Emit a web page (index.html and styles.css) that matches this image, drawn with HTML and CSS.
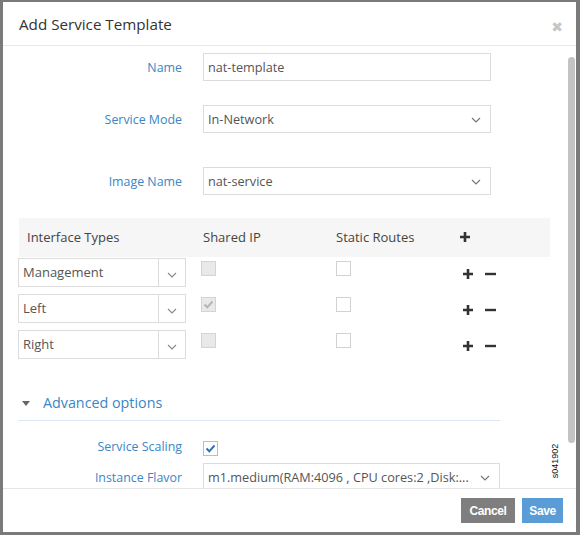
FILE: index.html
```html
<!DOCTYPE html>
<html>
<head>
<meta charset="utf-8">
<link rel="stylesheet" href="styles.css">
</head>
<body>
<div class="frame">
  <div class="modal">
    <div class="modal-header">
      <span class="title">Add Service Template</span>
      <span class="close">&#x2716;</span>
    </div>
    <div class="modal-body">
      <div class="form-row row-name">
        <label class="lbl">Name</label>
        <div class="input">nat-template</div>
      </div>
      <div class="form-row row-mode">
        <label class="lbl">Service Mode</label>
        <div class="input select"><span class="val">In-Network</span><svg class="chev" width="10" height="6" viewBox="0 0 10 6"><path d="M1 1 L5 5 L9 1" fill="none" stroke="#777" stroke-width="1.2"/></svg></div>
      </div>
      <div class="form-row row-image">
        <label class="lbl">Image Name</label>
        <div class="input select"><span class="val">nat-service</span><svg class="chev" width="10" height="6" viewBox="0 0 10 6"><path d="M1 1 L5 5 L9 1" fill="none" stroke="#777" stroke-width="1.2"/></svg></div>
      </div>

      <div class="itable">
        <div class="ihead">
          <div class="c1">Interface Types</div>
          <div class="c2">Shared IP</div>
          <div class="c3">Static Routes</div>
          <div class="c4"><svg class="plus-ic" width="10" height="10" viewBox="0 0 10 10"><path d="M5 0 V10 M0 5 H10" stroke="#333" stroke-width="2.6"/></svg></div>
        </div>
        <div class="irow">
          <div class="c1"><div class="combo"><span class="ctext">Management</span><span class="cbtn"><svg width="10" height="6" viewBox="0 0 10 6"><path d="M1 1 L5 5 L9 1" fill="none" stroke="#888" stroke-width="1.1"/></svg></span></div></div>
          <div class="c2"><span class="cb disabled"></span></div>
          <div class="c3"><span class="cb"></span></div>
          <div class="c4 ops"><svg width="10" height="10" viewBox="0 0 10 10"><path d="M5 0 V10 M0 5 H10" stroke="#333" stroke-width="2.6"/></svg><svg width="11" height="10" viewBox="0 0 11 10"><path d="M0 5 H11" stroke="#333" stroke-width="2.4"/></svg></div>
        </div>
        <div class="irow">
          <div class="c1"><div class="combo"><span class="ctext">Left</span><span class="cbtn"><svg width="10" height="6" viewBox="0 0 10 6"><path d="M1 1 L5 5 L9 1" fill="none" stroke="#888" stroke-width="1.1"/></svg></span></div></div>
          <div class="c2"><span class="cb disabled"><svg width="13" height="13" viewBox="0 0 13 13"><path d="M2.5 6.5 L5.3 9.3 L10.5 3.5" fill="none" stroke="#b5b5b5" stroke-width="2"/></svg></span></div>
          <div class="c3"><span class="cb"></span></div>
          <div class="c4 ops"><svg width="10" height="10" viewBox="0 0 10 10"><path d="M5 0 V10 M0 5 H10" stroke="#333" stroke-width="2.6"/></svg><svg width="11" height="10" viewBox="0 0 11 10"><path d="M0 5 H11" stroke="#333" stroke-width="2.4"/></svg></div>
        </div>
        <div class="irow">
          <div class="c1"><div class="combo"><span class="ctext">Right</span><span class="cbtn"><svg width="10" height="6" viewBox="0 0 10 6"><path d="M1 1 L5 5 L9 1" fill="none" stroke="#888" stroke-width="1.1"/></svg></span></div></div>
          <div class="c2"><span class="cb disabled"></span></div>
          <div class="c3"><span class="cb"></span></div>
          <div class="c4 ops"><svg width="10" height="10" viewBox="0 0 10 10"><path d="M5 0 V10 M0 5 H10" stroke="#333" stroke-width="2.6"/></svg><svg width="11" height="10" viewBox="0 0 11 10"><path d="M0 5 H11" stroke="#333" stroke-width="2.4"/></svg></div>
        </div>
      </div>

      <div class="adv">
        <svg class="tri" width="8" height="5" viewBox="0 0 8 5"><path d="M0 0 L8 0 L4 5 Z" fill="#666"/></svg>
        <span class="adv-title">Advanced options</span>
      </div>

      <div class="form-row row-scaling">
        <label class="lbl">Service Scaling</label>
        <div><span class="cb checked"><svg width="13" height="13" viewBox="0 0 13 13"><path d="M2.5 6.5 L5.3 9.3 L10.5 3.5" fill="none" stroke="#2d72b8" stroke-width="2"/></svg></span></div>
      </div>
      <div class="form-row row-flavor">
        <label class="lbl">Instance Flavor</label>
        <div class="input select wide"><span class="val">m1.medium(RAM:4096 , CPU cores:2 ,Disk:...</span><svg class="chev" width="10" height="6" viewBox="0 0 10 6"><path d="M1 1 L5 5 L9 1" fill="none" stroke="#777" stroke-width="1.2"/></svg></div>
      </div>

      <div class="scrollthumb"></div>
      <div class="stamp">s041902</div>
    </div>
    <div class="modal-footer">
      <button class="btn cancel">Cancel</button>
      <button class="btn save">Save</button>
    </div>
  </div>
</div>
</body>
</html>
```

FILE: styles.css
```css
* { box-sizing: border-box; }
html, body { margin: 0; padding: 0; }
body {
  width: 580px;
  height: 535px;
  overflow: hidden;
  font-family: "Open Sans", "Noto Sans", sans-serif;
}
.frame {
  width: 580px;
  height: 535px;
  background: #7a7a7a;
  padding: 2px 4px 3px 3px;
}
.modal {
  background: #fff;
  height: 530px;
  display: flex;
  flex-direction: column;
}
.modal-header {
  height: 44px;
  flex: none;
  border-bottom: 1px solid #e8e8e8;
  display: flex;
  align-items: center;
  justify-content: space-between;
  padding: 0 13px 0 16px;
}
.title {
  font-size: 15.2px;
  color: #333;
  margin-top: 1px;
}
.close {
  font-size: 14px;
  color: #c6c6c6;
  font-family: "DejaVu Sans", sans-serif;
  font-weight: bold;
  margin-top: 6px;
}
.modal-body {
  flex: 1;
  position: relative;
  overflow: hidden;
  padding-top: 7px;
}
.form-row {
  display: grid;
  grid-template-columns: 179px 288px;
  column-gap: 21px;
  align-items: center;
}
.lbl {
  text-align: right;
  color: #3a86c6;
  font-size: 12.4px;
}
.input {
  height: 28px;
  border: 1px solid #dcdcdc;
  font-size: 12.7px;
  color: #555;
  padding: 0 5px 0 4px;
  display: flex;
  align-items: center;
  justify-content: space-between;
}
.chev { flex: none; margin-right: 4px; margin-top: 1px; }
.row-mode { margin-top: 24px; }
.row-image { margin-top: 34px; }

.itable {
  margin: 23px 0 0 16px;
  width: 531px;
  font-size: 13px;
  color: #444;
}
.ihead, .irow {
  display: grid;
  grid-template-columns: 181px 136px 124px 1fr;
}
.ihead {
  height: 39px;
  background: #f6f6f6;
  align-items: center;
  margin-bottom: 1px;
}
.ihead .c1 { padding-left: 8px; margin-top: -2px; }
.ihead .c2 { padding-left: 3px; margin-top: -2px; }
.ihead .c3 { margin-top: -2px; }
.ihead .c4 { display: flex; align-items: center; padding-left: 0; margin-top: -2px; }
.irow {
  height: 28px;
  margin-bottom: 8px;
}
.combo {
  width: 168px;
  height: 29px;
  border: 1px solid #dcdcdc;
  display: flex;
  margin-left: -1px;
}
.ctext {
  flex: 1;
  display: flex;
  align-items: center;
  padding-left: 4px;
  color: #555;
  margin-top: -1px;
}
.cbtn {
  width: 27px;
  border-left: 1px solid #dcdcdc;
  display: flex;
  align-items: center;
  justify-content: center;
  padding-top: 4px;
}
.cb {
  display: inline-flex;
  align-items: center;
  justify-content: center;
  width: 15px;
  height: 15px;
  border: 1px solid #d2d2d2;
  background: #fff;
  margin-top: 3px;
  vertical-align: top;
}
.c2 .cb { margin-left: 1px; }
.cb.disabled { background: #e9e9e9; border-color: #d4d4d4; }
.ops {
  display: flex;
  align-items: center;
  padding-left: 3px;
  padding-top: 3px;
  gap: 12px;
}

.adv {
  margin: 31px 0 0 15px;
  width: 482px;
  height: 32px;
  border-bottom: 1px solid #dbe8f3;
  display: flex;
  align-items: flex-start;
  padding-left: 4px;
}
.tri { margin-top: 12px; }
.adv-title {
  margin-left: 13px;
  font-size: 14.3px;
  color: #3a86c6;
  line-height: 20px;
  margin-top: 4px;
}
.row-scaling { margin-top: 20px; height: 15px; }
.row-scaling .cb { margin-top: 0; border-color: #bdbdbd; }
.row-scaling .lbl { align-self: start; margin-top: -3px; line-height: 17px; }
.row-flavor { margin-top: 7px; grid-template-columns: 179px 297px; }
.row-flavor .lbl { margin-top: 1px; }
.row-flavor .val { white-space: nowrap; overflow: hidden; }

.scrollthumb {
  position: absolute;
  right: 1px;
  top: 11px;
  width: 7px;
  height: 386px;
  background: #c3c3c3;
  border-radius: 4px;
}
.stamp {
  position: absolute;
  left: 532px;
  top: 410px;
  font-family: "Liberation Sans", Arial, sans-serif;
  font-size: 9px;
  color: #111;
  transform: rotate(-90deg);
  transform-origin: center;
  width: 40px;
  text-align: center;
}

.modal-footer {
  flex: none;
  height: 44px;
  border-top: 1px solid #e5e5e5;
  display: flex;
  justify-content: flex-end;
  align-items: flex-start;
  padding: 9px 13px 0 0;
  gap: 7px;
}
.btn {
  border: none;
  height: 25px;
  color: #fff;
  font-family: "Liberation Sans", Arial, sans-serif;
  font-weight: bold;
  font-size: 12px;
  letter-spacing: -0.4px;
  padding: 0;
}
.cancel { width: 54px; background: #7e7e7e; }
.save { width: 41px; background: #5a9cd6; }
```
